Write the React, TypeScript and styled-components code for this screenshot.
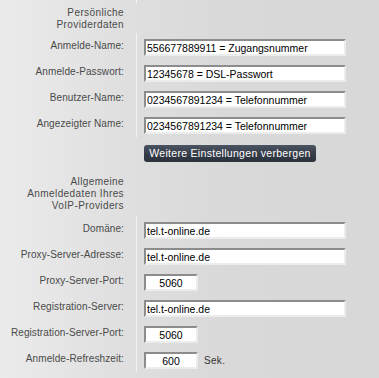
import React from "react";
import styled, { createGlobalStyle } from "styled-components";

const GlobalStyle = createGlobalStyle`
  html, body {
    margin: 0;
    padding: 0;
  }
  body {
    font-family: "Liberation Sans", Arial, sans-serif;
  }
`;

const Page = styled.div`
  width: 379px;
  height: 378px;
  overflow: hidden;
  background: linear-gradient(to right, #ebebeb 0%, #dedede 36%, #d9d9d9 60%, #d8d8d8 100%);
`;

const Form = styled.div`
  display: grid;
  grid-template-columns: 136px 1fr;
`;

const LabelCell = styled.div<{ $height?: number; $padTop?: number; $heading?: boolean }>`
  box-sizing: border-box;
  height: ${({ $height }) => $height ?? 26}px;
  padding: ${({ $padTop }) => $padTop ?? 0}px 12px 0 0;
  display: flex;
  align-items: ${({ $padTop }) => ($padTop !== undefined ? "flex-start" : "center")};
  justify-content: flex-end;
  text-align: right;
  white-space: nowrap;
  font-family: "Liberation Sans", Arial, sans-serif;
  font-size: 10px;
  letter-spacing: ${({ $heading }) => ($heading ? 0.4 : 0.1)}px;
  line-height: 12px;
  color: #4a4a4a;
`;

const FieldCell = styled.div<{ $bordered?: boolean; $height?: number; $padTop?: number }>`
  box-sizing: border-box;
  height: ${({ $height }) => $height ?? 26}px;
  padding: ${({ $padTop }) => $padTop ?? 6}px 0 0 7px;
  border-left: 1px solid ${({ $bordered }) => ($bordered ? "#f3f3f3" : "transparent")};
  display: flex;
  align-items: flex-start;
  gap: 6px;
`;

const TextInput = styled.input<{ $narrow?: boolean }>`
  box-sizing: border-box;
  width: ${({ $narrow }) => ($narrow ? 54 : 202)}px;
  height: 17px;
  margin: 0;
  padding: 0 1px;
  background: #ffffff;
  border-top: 2px solid #8c8c8c;
  border-left: 2px solid #8c8c8c;
  border-right: 2px solid #ececec;
  border-bottom: 2px solid #ececec;
  outline: none;
  font-family: "Liberation Sans", Arial, sans-serif;
  font-size: 10.5px;
  color: #000000;
  text-align: ${({ $narrow }) => ($narrow ? "center" : "left")};
`;

const Unit = styled.span`
  font-family: "Liberation Sans", Arial, sans-serif;
  font-size: 10px;
  letter-spacing: 0.3px;
  line-height: 17px;
  color: #333333;
`;

const ToggleButton = styled.button`
  box-sizing: border-box;
  width: 172px;
  height: 17px;
  margin: 0;
  padding: 0;
  border: none;
  border-radius: 3px;
  background: linear-gradient(to bottom, #4b5462 0%, #343c48 55%, #2b323c 100%);
  color: #ffffff;
  font-family: "Liberation Sans", Arial, sans-serif;
  font-size: 10.5px;
  letter-spacing: 0.3px;
  line-height: 17px;
  white-space: nowrap;
  cursor: pointer;
`;

type Field = { label: string; value: string; narrow?: boolean; unit?: string };

const providerFields: Field[] = [
  { label: "Anmelde-Name:", value: "556677889911 = Zugangsnummer" },
  { label: "Anmelde-Passwort:", value: "12345678 = DSL-Passwort" },
  { label: "Benutzer-Name:", value: "0234567891234 = Telefonnummer" },
  { label: "Angezeigter Name:", value: "0234567891234 = Telefonnummer" },
];

const voipFields: Field[] = [
  { label: "Domäne:", value: "tel.t-online.de" },
  { label: "Proxy-Server-Adresse:", value: "tel.t-online.de" },
  { label: "Proxy-Server-Port:", value: "5060", narrow: true },
  { label: "Registration-Server:", value: "tel.t-online.de" },
  { label: "Registration-Server-Port:", value: "5060", narrow: true },
  { label: "Anmelde-Refreshzeit:", value: "600", narrow: true, unit: "Sek." },
];

const FieldRow = ({ field }: { field: Field }) => (
  <>
    <LabelCell>{field.label}</LabelCell>
    <FieldCell $bordered>
      <TextInput readOnly $narrow={field.narrow} defaultValue={field.value} />
      {field.unit && <Unit>{field.unit}</Unit>}
    </FieldCell>
  </>
);

const App = () => (
  <Page>
    <GlobalStyle />
    <Form>
      <LabelCell $height={3} />
      <FieldCell $bordered $height={3} $padTop={0} />

      <LabelCell $height={30} $padTop={4} $heading>
        Persönliche
        <br />
        Providerdaten
      </LabelCell>
      <FieldCell $height={30} />

      {providerFields.map((f) => (
        <FieldRow key={f.label} field={f} />
      ))}

      <LabelCell $height={33} $padTop={0} />
      <FieldCell $height={33} $padTop={8}>
        <ToggleButton type="button">Weitere Einstellungen verbergen</ToggleButton>
      </FieldCell>

      <LabelCell $height={46} $padTop={6} $heading>
        Allgemeine
        <br />
        Anmeldedaten Ihres
        <br />
        VoIP-Providers
      </LabelCell>
      <FieldCell $height={46} />

      {voipFields.map((f) => (
        <FieldRow key={f.label} field={f} />
      ))}
    </Form>
  </Page>
);

export default App;
